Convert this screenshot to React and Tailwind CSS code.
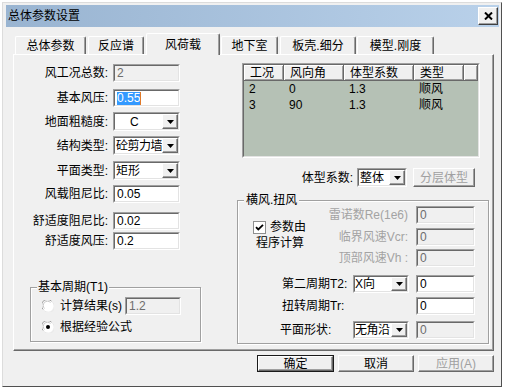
import React from "react";

function Sunken({ className = "", inner = "", children }) {
  return (
    <div className={`border border-t-[#a0a0a0] border-l-[#a0a0a0] border-r-white border-b-white ${className}`}>
      <div className={`h-full flex items-center border border-t-[#696969] border-l-[#696969] border-r-[#e3e3e3] border-b-[#e3e3e3] ${inner}`}>
        {children}
      </div>
    </div>
  );
}

function Edit({ value, disabled, className = "" }) {
  return (
    <Sunken
      className={`h-[18px] ${className}`}
      inner={`pl-[2px] overflow-hidden whitespace-nowrap ${disabled ? "bg-[#f0f0f0] text-[#6d6d6d]" : "bg-white text-black"}`}
    >
      {value}
    </Sunken>
  );
}

function ArrowButton() {
  return (
    <div className="w-[16px] self-stretch flex items-center justify-center bg-[#f0f0f0] border border-t-white border-l-white border-r-[#696969] border-b-[#696969] shadow-[inset_-1px_-1px_0_#a0a0a0]">
      <svg width="7" height="4" viewBox="0 0 7 4">
        <path d="M0 0h7L3.5 4z" fill="#000" />
      </svg>
    </div>
  );
}

function Combo({ value, className = "", textClass = "pl-[2px]" }) {
  return (
    <Sunken className={className} inner="bg-white">
      <div className={`flex-1 overflow-hidden whitespace-nowrap ${textClass}`}>{value}</div>
      <ArrowButton />
    </Sunken>
  );
}

function Btn({ children, className = "", isDefault, disabled }) {
  return (
    <div className={`h-[17px] bg-[#f0f0f0] ${isDefault ? "border border-[#1a1a1a]" : ""} ${className}`}>
      <div
        className={`h-full flex items-center justify-center border border-t-white border-l-white border-r-[#696969] border-b-[#696969] shadow-[inset_-1px_-1px_0_#a0a0a0] ${disabled ? "text-[#a0a0a0]" : "text-black"}`}
      >
        {children}
      </div>
    </div>
  );
}

function Radio({ checked }) {
  return (
    <svg width="12" height="12" viewBox="0 0 12 12">
      <circle cx="6" cy="6" r="5.5" fill="#fff" />
      <path d="M1.2 9.5A5.5 5.5 0 0 1 9.5 1.2" fill="none" stroke="#a0a0a0" />
      <path d="M2.5 8.5A4 4 0 0 1 8.5 2.5" fill="none" stroke="#c8c8c8" />
      <path d="M10.8 2.5A5.5 5.5 0 0 1 2.5 10.8" fill="none" stroke="#e8e8e8" />
      {checked && <circle cx="6" cy="6" r="2" fill="#000" />}
    </svg>
  );
}

function Check() {
  return (
    <svg width="13" height="13" viewBox="0 0 13 13">
      <rect x="0.5" y="0.5" width="12" height="12" fill="#fff" stroke="#8e8f8f" />
      <path d="M3 6.2l2.3 2.3L10 3.8" fill="none" stroke="#000" strokeWidth="1.8" />
    </svg>
  );
}

function Row({ label, mt, children }) {
  return (
    <div className={`flex items-center ${mt}`}>
      <div className="w-[94px] text-right whitespace-nowrap">{label}</div>
      <div className="ml-[5px] w-[67px]">{children}</div>
    </div>
  );
}

function HeaderCell({ w, children }) {
  return (
    <div className={`${w} h-[16px] flex items-end pl-[6px] leading-[14px] bg-[#f0f0f0] border-r border-b border-r-[#696969] border-b-[#696969] shadow-[inset_1px_1px_0_#fff,inset_-1px_-1px_0_#a0a0a0]`}>
      {children}
    </div>
  );
}

const rows = [
  ["2", "0", "1.3", "顺风"],
  ["3", "90", "1.3", "顺风"],
];

export default function App() {
  return (
    <div className="w-[505px] h-[388px] bg-white overflow-hidden text-[12px] leading-[16px] text-black font-['Liberation_Sans','Noto_Sans_CJK_SC',sans-serif]">
      <div className="ml-[2px] mt-[2px] w-[500px] h-[385px] bg-[#f0f0f0] border border-t-[#dcdcdc] border-l-[#dcdcdc] border-r-[#505050] border-b-[#505050] flex flex-col">
        {/* title bar */}
        <div className="ml-[3px] mt-[2px] w-[493px] h-[22px] flex items-center justify-between bg-linear-to-r from-[#99b4d1] to-[#b9d1ea]">
          <span className="pl-[2px]">总体参数设置</span>
          <div className="mr-[1px] w-[20px] h-[18px] flex items-center justify-center bg-[#f0f0f0] border border-t-white border-l-white border-r-[#404040] border-b-[#404040] shadow-[inset_-1px_-1px_0_#a0a0a0]">
            <svg width="9" height="8" viewBox="0 0 9 8">
              <path d="M1 0.5l7 7M8 0.5l-7 7" stroke="#000" strokeWidth="2" />
            </svg>
          </div>
        </div>

        {/* tabs */}
        <div className="flex items-start h-[22px] mt-[6px] -mb-[1px]">
          <div className="ml-[12px] mt-[3px] w-[71px] h-[18px] flex items-center justify-center border-l border-t border-r border-l-white border-t-white border-r-[#696969] rounded-t-[2px] shadow-[inset_-1px_0_0_#a0a0a0]">总体参数</div>
          <div className="ml-[2px] mt-[3px] w-[56px] h-[18px] flex items-center justify-center border-l border-t border-r border-l-white border-t-white border-r-[#696969] rounded-t-[2px] shadow-[inset_-1px_0_0_#a0a0a0]">反应谱</div>
          <div className="relative z-10 ml-[2px] w-[74px] h-[22px] flex justify-center pt-[3px] bg-[#f0f0f0] border-l border-t border-r border-l-white border-t-white border-r-[#696969] rounded-t-[2px] shadow-[inset_-1px_0_0_#a0a0a0]">风荷载</div>
          <div className="ml-[1px] mt-[3px] w-[57px] h-[18px] flex items-center justify-center border-l border-t border-r border-l-white border-t-white border-r-[#696969] rounded-t-[2px] shadow-[inset_-1px_0_0_#a0a0a0]">地下室</div>
          <div className="ml-[2px] mt-[3px] w-[76px] h-[18px] flex items-center justify-center border-l border-t border-r border-l-white border-t-white border-r-[#696969] rounded-t-[2px] shadow-[inset_-1px_0_0_#a0a0a0]">板壳.细分</div>
          <div className="ml-[1px] mt-[3px] w-[77px] h-[18px] flex items-center justify-center border-l border-t border-r border-l-white border-t-white border-r-[#696969] rounded-t-[2px] shadow-[inset_-1px_0_0_#a0a0a0]">模型.刚度</div>
        </div>

        {/* panel */}
        <div className="ml-[10px] w-[481px] h-[297px] flex border border-t-white border-l-white border-r-[#696969] border-b-[#696969] shadow-[inset_-1px_-1px_0_#a0a0a0]">
          {/* left column */}
          <div className="w-[222px] flex flex-col">
            <Row label="风工况总数:" mt="mt-[9px]">
              <Edit disabled value="2" />
            </Row>
            <Row label="基本风压:" mt="mt-[7px]">
              <Sunken className="h-[18px]" inner="bg-white pl-[2px]">
                <span className="bg-[#3399ff] text-white leading-[13px]">0.55</span>
                <span className="w-[1px] h-[13px] bg-[#e07a2a]" />
              </Sunken>
            </Row>
            <Row label="地面粗糙度:" mt="mt-[5px]">
              <Combo className="h-[19px]" value="C" textClass="pl-[15px]" />
            </Row>
            <Row label="结构类型:" mt="mt-[5px]">
              <Combo className="h-[19px]" value="砼剪力墙" textClass="pl-[1px] tracking-[-0.5px]" />
            </Row>
            <Row label="平面类型:" mt="mt-[6px]">
              <Combo className="h-[19px]" value="矩形" textClass="pl-[1px]" />
            </Row>
            <Row label="风载阻尼比:" mt="mt-[5px]">
              <Edit value="0.05" />
            </Row>
            <Row label="舒适度阻尼比:" mt="mt-[9px]">
              <Edit value="0.02" />
            </Row>
            <Row label="舒适度风压:" mt="mt-[2px]">
              <Edit value="0.2" />
            </Row>

            <div className="relative ml-[16px] mt-[37px] w-[171px] h-[55px] border border-[#a0a0a0] shadow-[inset_1px_1px_0_#fff,1px_1px_0_#fff]">
              <span className="absolute -top-[9px] left-[6px] px-[1px] bg-[#f0f0f0]">基本周期(T1)</span>
              <div className="mt-[9px] flex items-center h-[18px]">
                <div className="ml-[11px]"><Radio /></div>
                <span className="ml-[6px]">计算结果(s)</span>
                <Edit disabled value="1.2" className="ml-[3px] w-[56px]" />
              </div>
              <div className="mt-[4px] flex items-center h-[16px]">
                <div className="ml-[11px]"><Radio checked /></div>
                <span className="ml-[6px]">根据经验公式</span>
              </div>
            </div>
          </div>

          {/* right column */}
          <div className="flex-1 flex flex-col">
            <Sunken className="ml-[6px] mt-[8px] w-[238px] h-[95px]" inner="!items-stretch flex-col bg-[#b5c1b5]">
              <div className="flex">
                <HeaderCell w="w-[40px]">工况</HeaderCell>
                <HeaderCell w="w-[60px]">风向角</HeaderCell>
                <HeaderCell w="w-[70px]">体型系数</HeaderCell>
                <HeaderCell w="w-[50px]">类型</HeaderCell>
                <HeaderCell w="flex-1"></HeaderCell>
              </div>
              {rows.map((r) => (
                <div key={r[0]} className="flex h-[16px] items-center">
                  <div className="w-[40px] pl-[5px]">{r[0]}</div>
                  <div className="w-[60px] pl-[5px]">{r[1]}</div>
                  <div className="w-[70px] pl-[5px]">{r[2]}</div>
                  <div className="w-[50px] pl-[5px]">{r[3]}</div>
                </div>
              ))}
            </Sunken>

            <div className="mt-[10px] w-[244px] pr-[5px] flex items-center justify-end">
              <span>体型系数:</span>
              <Combo className="ml-[4px] w-[50px] h-[19px]" value="整体" textClass="pl-[1px]" />
              <Btn disabled className="ml-[6px] w-[62px] !h-[19px]">分层体型</Btn>
            </div>

            <div className="relative ml-[1px] mt-[13px] w-[252px] h-[144px] border border-[#a0a0a0] shadow-[inset_1px_1px_0_#fff,1px_1px_0_#fff]">
              <span className="absolute -top-[9px] left-[6px] px-[2px] bg-[#f0f0f0]">横风.扭风</span>

              <div className="mt-[5px] flex">
                <div className="w-[82px] shrink-0 pl-[15px] pb-[3px] flex flex-col justify-center whitespace-nowrap">
                  <div className="flex items-center">
                    <Check />
                    <span className="ml-[4px]">参数由</span>
                  </div>
                  <div className="pl-[3px]">程序计算</div>
                </div>
                <div className="w-[155px] shrink-0 flex flex-col">
                  <div className="flex items-center justify-end">
                    <span className="text-[#a3a3a3] whitespace-nowrap">雷诺数Re(1e6)</span>
                    <Edit disabled value="0" className="ml-[8px] w-[59px] shrink-0" />
                  </div>
                  <div className="mt-[4px] flex items-center justify-end">
                    <span className="text-[#a3a3a3] whitespace-nowrap">临界风速Vcr:</span>
                    <Edit disabled value="0" className="ml-[8px] w-[59px] shrink-0" />
                  </div>
                  <div className="mt-[3px] flex items-center justify-end">
                    <span className="text-[#a3a3a3] whitespace-nowrap">顶部风速Vh :</span>
                    <Edit disabled value="0" className="ml-[8px] w-[59px] shrink-0" />
                  </div>
                </div>
              </div>

              <div className="mt-[8px] pl-[44px] flex items-center">
                <span className="w-[71px] whitespace-nowrap">第二周期T2:</span>
                <Combo className="w-[56px] h-[18px]" value="X向" textClass="pl-[0px]" />
                <Edit value="0" className="ml-[7px] w-[59px]" />
              </div>
              <div className="mt-[4px] pl-[44px] flex items-center">
                <span className="w-[71px] whitespace-nowrap">扭转周期Tr:</span>
                <div className="w-[56px]" />
                <Edit value="0" className="ml-[7px] w-[59px]" />
              </div>
              <div className="mt-[6px] pl-[42px] flex items-center">
                <span className="w-[73px] whitespace-nowrap">平面形状:</span>
                <Combo className="w-[56px] h-[18px]" value="无角沿" textClass="pl-[0px] tracking-[-0.5px]" />
                <Edit disabled value="0" className="ml-[7px] w-[59px]" />
              </div>
            </div>
          </div>
        </div>

        {/* buttons */}
        <div className="mt-[4px] ml-[254px] flex gap-[4px]">
          <Btn isDefault className="w-[77px]">确定</Btn>
          <Btn className="w-[76px]">取消</Btn>
          <Btn disabled className="w-[76px]">应用(A)</Btn>
        </div>
      </div>
    </div>
  );
}
